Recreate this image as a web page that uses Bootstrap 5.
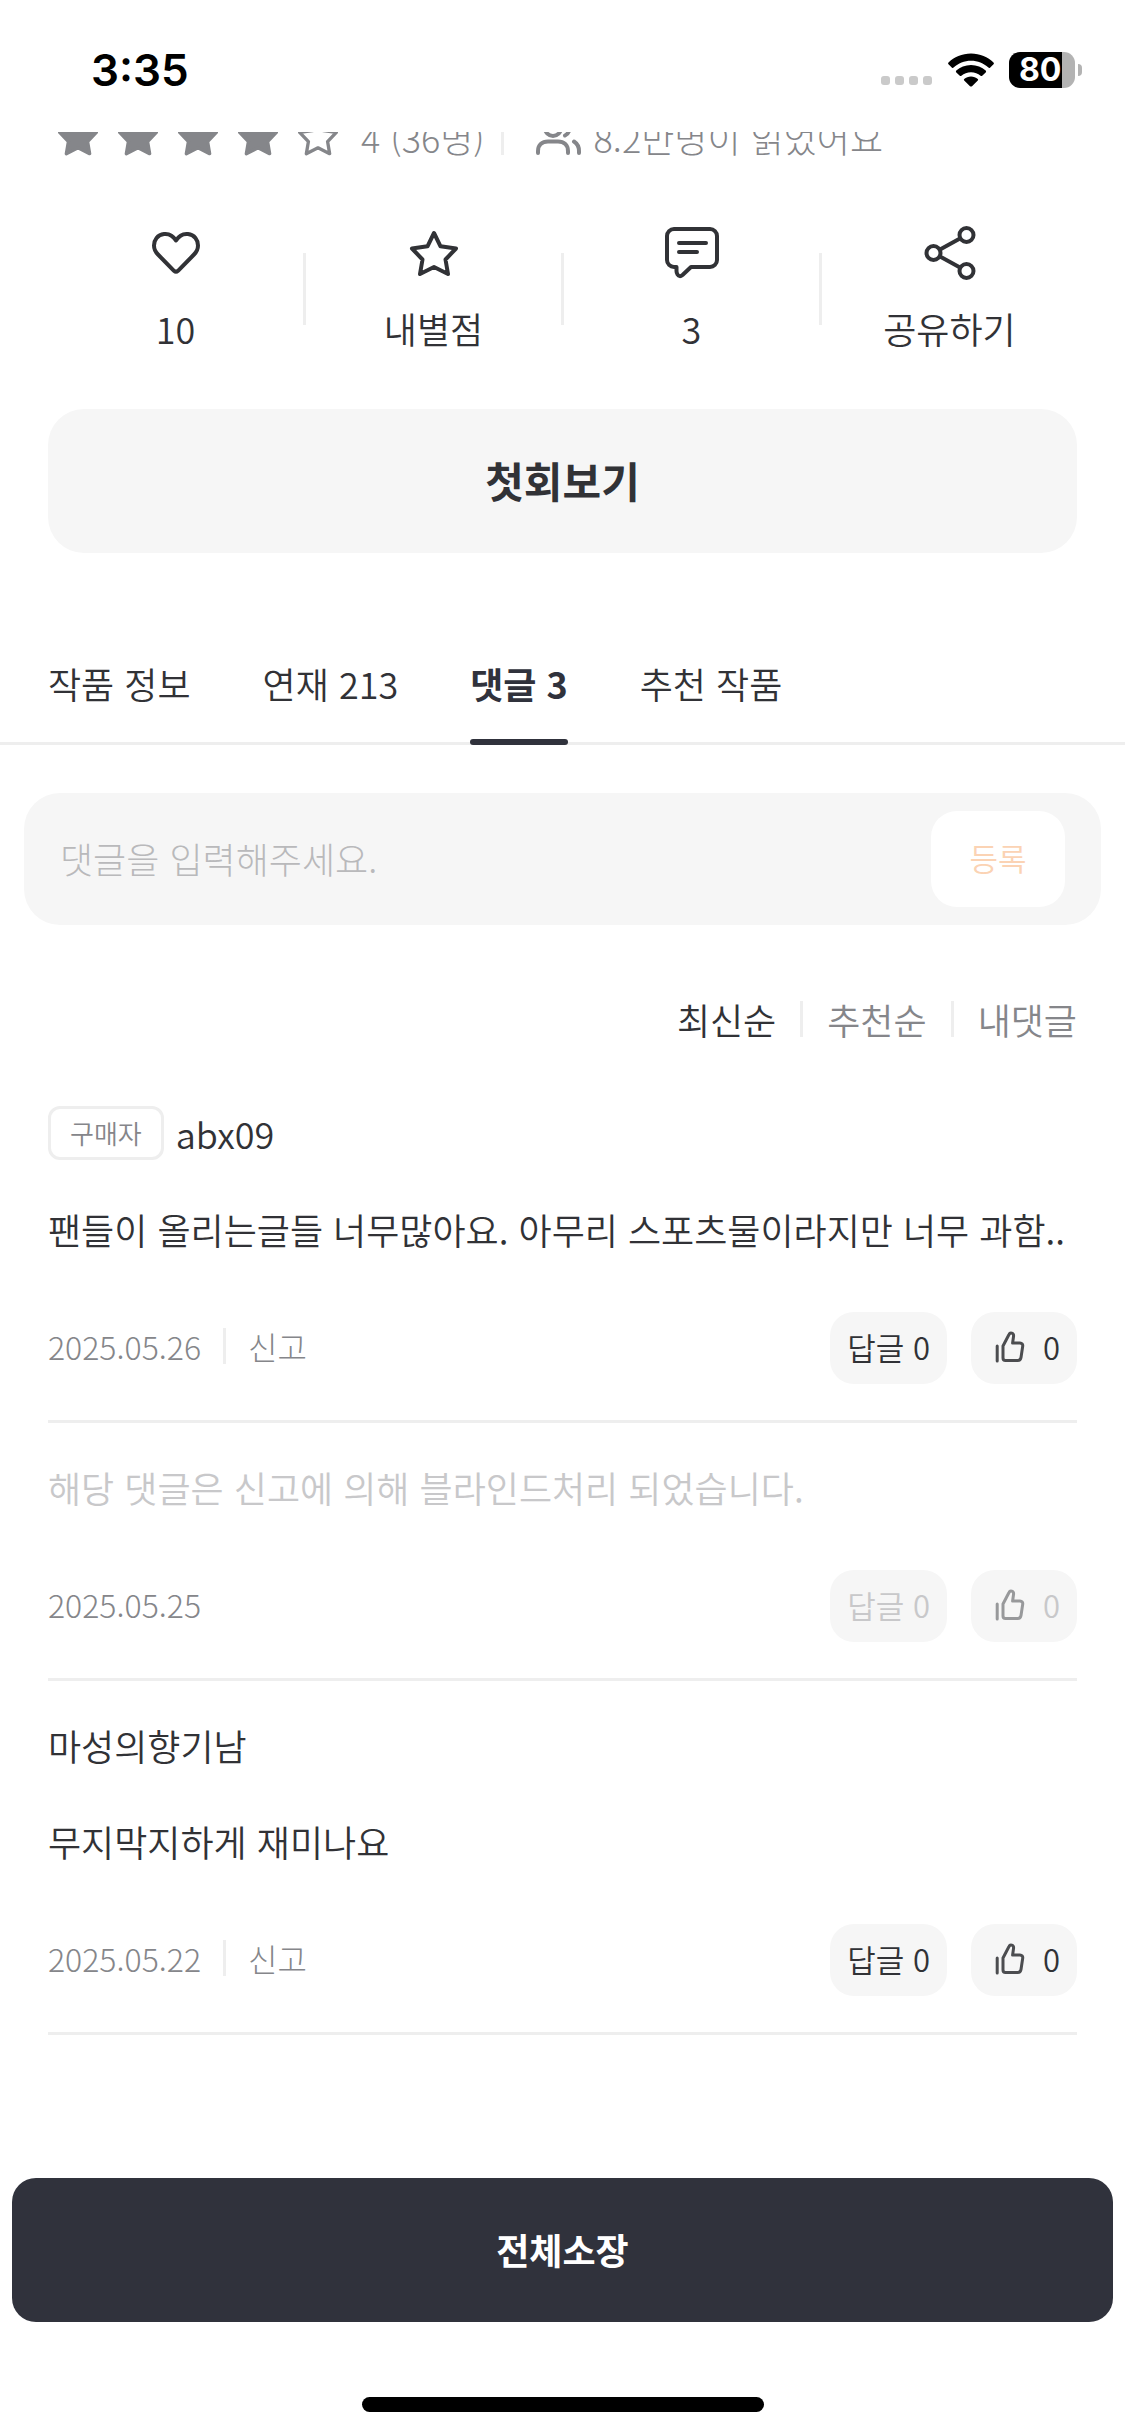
<!DOCTYPE html>
<html lang="ko">
<head>
<meta charset="utf-8">
<meta name="viewport" content="width=device-width, initial-scale=1">
<title>작품 댓글</title>
<link href="https://cdn.jsdelivr.net/npm/bootstrap@5.3.0/dist/css/bootstrap.min.css" rel="stylesheet">
<style>
  :root { --ink: #313236; --deep: #30323c; --muted: #85868a; --faint: #c8c8ca; --line: #eee; --fill: #f6f6f6; }
  body { font-family: "Noto Sans CJK KR", sans-serif; font-weight: 350; font-size: 36px; line-height: 48px; color: var(--ink); background: #fff; }
  svg { display: block; flex: none; fill: none; stroke: currentColor; stroke-linecap: round; stroke-linejoin: round; }
  a, a:hover { color: inherit; text-decoration: none; }
  .btn { --bs-btn-border-width: 0; --bs-btn-color: var(--ink); --bs-btn-disabled-opacity: 1; font-size: inherit; line-height: inherit; font-weight: inherit; }
  .gutter { padding-left: 48px; padding-right: 48px; }
  .vline { width: 3px; height: 36px; background: var(--line); flex: none; }

  .statusbar { height: 132px; padding: 7px 43px 0 91px; color: #000; }
  .clock { font: 600 44px/52px Inter, sans-serif; }
  .signal { gap: 5px; margin: 22px 16px 0 0; }
  .signal i { width: 9px; height: 9px; border-radius: 3px; background: #cacaca; }
  .cell { width: 66px; height: 36px; margin-left: 15px; padding-left: 10px; border-radius: 11px; background: linear-gradient(90deg, #000 80%, #b3b3b3 80%); color: #fff; font: 700 32px/36px Inter, sans-serif; }
  .cell-tip { width: 4px; height: 12px; margin-left: 3px; border-radius: 0 4px 4px 0; background: #b3b3b3; }

  .rating-clip { height: 29px; padding-left: 58px; color: var(--muted); font-weight: 300; }
  .rating-row { height: 48px; flex: none; }
  .stars { gap: 20px; margin-right: 23px; }

  .actions { padding-top: 64px; padding-bottom: 57px; }
  .actions .btn { gap: 23px; }
  .actions .vline { height: 72px; }

  .first-btn { height: 144px; border-radius: 36px; padding-bottom: 9px; font-size: 42px; font-weight: 700; --bs-btn-bg: var(--fill); }

  .work-tabs { margin-top: 106px; gap: 72px; border-bottom: 3px solid var(--line); }
  .work-tabs .nav-link { position: relative; padding: 0 0 35px; color: var(--ink); }
  .work-tabs .nav-link.active { font-weight: 700; color: var(--deep); }
  .work-tabs .nav-link.active::after { content: ""; position: absolute; left: 0; right: 0; bottom: -3px; height: 6px; border-radius: 3px; background: var(--deep); }

  .write-box { margin: 48px 24px 0; padding: 18px 36px; border-radius: 36px; background: var(--fill); }
  .write-box .form-control { border: 0; background: none; box-shadow: none; padding: 0 0 3px; font-size: 36px; line-height: 48px; font-weight: 300; color: var(--ink); }
  .write-box .form-control::placeholder { color: #b9b9bb; }
  .send-btn { flex: none; width: 134px; height: 96px; padding: 0 0 3px; border-radius: 26px; font-size: 31px; --bs-btn-disabled-bg: #fff; --bs-btn-disabled-color: #fbd3b4; }

  .sorter { padding-top: 70px; gap: 24px; color: var(--muted); }
  .sorter .current { color: var(--ink); }

  .comment { padding-top: 40px; padding-bottom: 36px; border-bottom: 3px solid var(--line); }
  .comment:first-child { padding-top: 66px; }
  .writer { height: 48px; gap: 12px; margin-bottom: 48px; }
  .buyer { padding: 0 19px; border: 3px solid var(--line); border-radius: 12px; color: var(--muted); font-size: 26px; }
  .meta { margin-top: 59px; font-size: 32px; color: var(--muted); font-weight: 300; }
  .meta .info { gap: 22px; padding-bottom: 4px; }
  .meta .tools { gap: 24px; }
  .meta .btn { height: 72px; border-radius: 24px; padding: 0 17px 2px; font-size: 31px; font-weight: 350; --bs-btn-bg: var(--fill); --bs-btn-disabled-bg: var(--fill); --bs-btn-disabled-color: var(--faint); }
  .meta .like { padding-left: 24px; gap: 18px; }
  .like svg { color: #4c4d50; }
  .like:disabled svg { color: #98999b; }
  .blinded { color: var(--faint); }

  .buybar { padding: 0 12px 24px; background: #fff; }
  .buy-btn { height: 144px; border-radius: 24px; padding-bottom: 9px; font-weight: 700; --bs-btn-bg: var(--deep); --bs-btn-color: #fff; }
  .home-bar { width: 402px; height: 15px; margin-top: 75px; border-radius: 8px; background: #000; }
</style>
</head>
<body class="d-flex flex-column min-vh-100">

<svg class="d-none" aria-hidden="true">
  <symbol id="star" viewBox="0 0 56 56"><path d="M28 8L34.500 21.300L50 23.500L39.500 34.500L42 49L28 42L14 49L16.500 34.500L6 23.500L21.500 21.300Z"/></symbol>
  <symbol id="thumb" viewBox="0 0 30 32"><path d="M2.200 15V30M8 15L14 3.500C15.200 1 18.800 2 18.600 5L17.600 12H25C27 12 28 13.500 27.700 15.200L26 26.500C25.700 28.500 24.500 29.500 22.700 29.500H10.500C9 29.500 8 28.500 8 27Z"/></symbol>
</svg>

<header class="statusbar d-flex align-items-center justify-content-between">
  <span class="clock">3:35</span>
  <div class="d-flex align-items-center">
    <div class="signal d-flex"><i></i><i></i><i></i><i></i></div>
    <svg width="46" height="34" viewBox="0 0 46 34" aria-label="Wi-Fi"><g stroke="none" fill="#000"><path d="M23 0.500C32 .5 40 4 45.500 9.500Q46.300 10.400 45.500 11.300L42 14.700Q41.200 15.300 40.400 14.600C35.700 10.300 29.700 7.800 23 7.800S10.300 10.300 5.600 14.600Q4.800 15.300 4 14.700L.5 11.300Q-.3 10.400 .5 9.500C6 4 14 .5 23 .5Z"/><path d="M23 12C28.700 12 33.900 14.100 37.700 17.600Q38.600 18.500 37.700 19.400L34.200 22.700Q33.400 23.300 32.600 22.700C30 20.500 26.700 19.200 23 19.200S16 20.500 13.400 22.700Q12.600 23.300 11.800 22.700L8.300 19.400Q7.400 18.500 8.300 17.600C12.100 14.100 17.300 12 23 12Z"/><path d="M23 23.500C25.600 23.500 28 24.400 29.800 26Q30.600 26.700 29.800 27.500L24 33.200Q23 34 22 33.200L16.200 27.500Q15.400 26.700 16.200 26C18 24.400 20.400 23.500 23 23.500Z"/></g></svg>
    <span class="cell">80</span><span class="cell-tip"></span>
  </div>
</header>

<div class="rating-clip d-flex align-items-end overflow-hidden">
  <div class="rating-row d-flex align-items-center">
    <div class="stars d-flex">
      <svg width="40" height="40" viewBox="4 5 48 48" stroke-width="4" aria-hidden="true"><use href="#star" width="56" height="56" fill="currentColor"/></svg>
      <svg width="40" height="40" viewBox="4 5 48 48" stroke-width="4" aria-hidden="true"><use href="#star" width="56" height="56" fill="currentColor"/></svg>
      <svg width="40" height="40" viewBox="4 5 48 48" stroke-width="4" aria-hidden="true"><use href="#star" width="56" height="56" fill="currentColor"/></svg>
      <svg width="40" height="40" viewBox="4 5 48 48" stroke-width="4" aria-hidden="true"><use href="#star" width="56" height="56" fill="currentColor"/></svg>
      <svg width="40" height="40" viewBox="4 5 48 48" stroke-width="4" aria-hidden="true"><use href="#star" width="56" height="56"/></svg>
    </div>
    <span>4 (36명)</span>
    <span class="vline mx-3"></span>
    <svg class="ms-3 me-2" width="46" height="40" viewBox="0 0 46 40" stroke-width="4" aria-hidden="true"><circle cx="17" cy="11" r="8"/><path d="M2 36V34C2 28 6 24.500 12 24.500H22C28 24.500 32 28 32 34V36M29 3.500C35 6 35 15.500 29 18.500M38 24.500C41 26.500 43 30 43 34V36"/></svg>
    <span class="ms-1">8.2만명이 읽었어요</span>
  </div>
</div>

<main>
  <div class="gutter">
    <div class="actions d-flex align-items-center">
      <button type="button" class="btn p-0 flex-fill w-25 d-flex flex-column align-items-center">
        <svg width="56" height="56" viewBox="0 0 56 56" stroke-width="4" aria-hidden="true"><path d="M28 15.500C25 10.500 20.500 8.500 16 9C9.500 9.700 6 15 6 20.500C6 24 7.500 27 10 29.500L26 45.800Q28 47.600 30 45.800L46 29.500C48.500 27 50 24 50 20.500C50 15 46.500 9.700 40 9C35.500 8.500 31 10.500 28 15.500Z"/></svg>
        <span>10</span>
      </button>
      <span class="vline"></span>
      <button type="button" class="btn p-0 flex-fill w-25 d-flex flex-column align-items-center">
        <svg width="56" height="56" stroke-width="4" aria-hidden="true"><use href="#star"/></svg>
        <span>내별점</span>
      </button>
      <span class="vline"></span>
      <button type="button" class="btn p-0 flex-fill w-25 d-flex flex-column align-items-center">
        <svg width="56" height="56" viewBox="0 0 56 56" stroke-width="4" aria-hidden="true"><path d="M10 4H46A7 7 0 0 1 53 11V35A7 7 0 0 1 46 42H27L18.500 50Q15.500 52.500 13.500 49.500Q12.500 48 12.500 46V42H10A7 7 0 0 1 3 35V11A7 7 0 0 1 10 4ZM15 18H42M15 27H33"/></svg>
        <span>3</span>
      </button>
      <span class="vline"></span>
      <button type="button" class="btn p-0 flex-fill w-25 d-flex flex-column align-items-center">
        <svg width="56" height="56" viewBox="0 0 56 56" stroke-width="4" aria-hidden="true"><circle cx="11.500" cy="28" r="7"/><circle cx="44.500" cy="10" r="7"/><circle cx="44.500" cy="46" r="7"/><path d="M18 24.500L38 13.500M18 31.500L38 42.500"/></svg>
        <span>공유하기</span>
      </button>
    </div>
    <button type="button" class="btn first-btn w-100">첫회보기</button>
  </div>

  <nav class="nav work-tabs gutter">
    <a class="nav-link" href="#info">작품 정보</a>
    <a class="nav-link" href="#episodes">연재 213</a>
    <a class="nav-link active" aria-current="page" href="#comments">댓글 3</a>
    <a class="nav-link" href="#similar">추천 작품</a>
  </nav>

  <form class="write-box d-flex align-items-center">
    <input class="form-control" type="text" placeholder="댓글을 입력해주세요." aria-label="댓글 입력">
    <button type="submit" class="btn send-btn" disabled>등록</button>
  </form>

  <section class="gutter" id="comments">
    <div class="sorter d-flex justify-content-end align-items-center">
      <a class="current" href="#latest">최신순</a><span class="vline"></span>
      <a href="#popular">추천순</a><span class="vline"></span>
      <a href="#mine">내댓글</a>
    </div>

    <div>
      <article class="comment">
        <div class="writer d-flex align-items-center"><span class="buyer">구매자</span><span>abx09</span></div>
        <div>팬들이 올리는글들 너무많아요. 아무리 스포츠물이라지만 너무 과함..</div>
        <div class="meta d-flex justify-content-between align-items-center">
          <div class="info d-flex align-items-center"><span>2025.05.26</span><span class="vline"></span><a href="#report">신고</a></div>
          <div class="tools d-flex">
            <button type="button" class="btn">답글 0</button>
            <button type="button" class="btn like d-flex align-items-center" aria-label="추천 0"><svg width="30" height="32" stroke-width="3" aria-hidden="true"><use href="#thumb"/></svg>0</button>
          </div>
        </div>
      </article>

      <article class="comment">
        <div class="blinded">해당 댓글은 신고에 의해 블라인드처리 되었습니다.</div>
        <div class="meta d-flex justify-content-between align-items-center">
          <div class="info d-flex align-items-center"><span>2025.05.25</span></div>
          <div class="tools d-flex">
            <button type="button" class="btn" disabled>답글 0</button>
            <button type="button" class="btn like d-flex align-items-center" aria-label="추천 0" disabled><svg width="30" height="32" stroke-width="3" aria-hidden="true"><use href="#thumb"/></svg>0</button>
          </div>
        </div>
      </article>

      <article class="comment">
        <div class="writer d-flex align-items-center">마성의향기남</div>
        <div>무지막지하게 재미나요</div>
        <div class="meta d-flex justify-content-between align-items-center">
          <div class="info d-flex align-items-center"><span>2025.05.22</span><span class="vline"></span><a href="#report">신고</a></div>
          <div class="tools d-flex">
            <button type="button" class="btn">답글 0</button>
            <button type="button" class="btn like d-flex align-items-center" aria-label="추천 0"><svg width="30" height="32" stroke-width="3" aria-hidden="true"><use href="#thumb"/></svg>0</button>
          </div>
        </div>
      </article>
    </div>
  </section>
</main>

<footer class="buybar sticky-bottom mt-auto">
  <button type="button" class="btn buy-btn w-100">전체소장</button>
  <div class="home-bar mx-auto"></div>
</footer>

<script src="https://cdn.jsdelivr.net/npm/bootstrap@5.3.0/dist/js/bootstrap.bundle.min.js"></script>
</body>
</html>
